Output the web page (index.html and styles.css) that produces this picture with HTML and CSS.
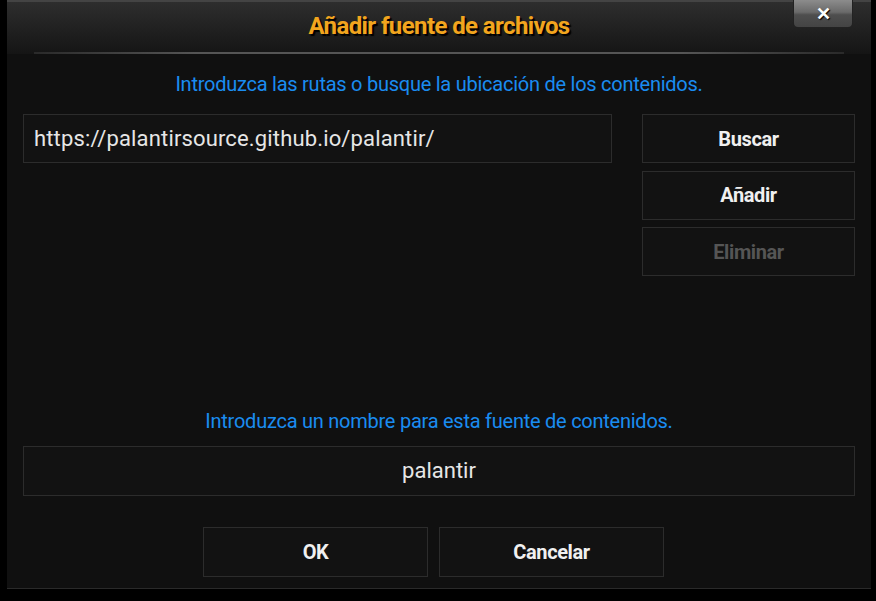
FILE: index.html
```html
<!DOCTYPE html>
<html lang="es">
<head>
<meta charset="UTF-8">
<title>Añadir fuente de archivos</title>
<link rel="stylesheet" href="styles.css">
</head>
<body>
<div class="dialog">
  <div class="header">
    <h1 class="title">Añadir fuente de archivos</h1>
    <button class="close">✕</button>
  </div>

  <div class="content">
    <p class="label label-top">Introduzca las rutas o busque la ubicación de los contenidos.</p>

    <div class="paths">
      <div class="field field-url">https://palantirsource.github.io/palantir/</div>
      <div class="side">
        <button class="btn">Buscar</button>
        <button class="btn">Añadir</button>
        <button class="btn disabled">Eliminar</button>
      </div>
    </div>

    <p class="label label-name">Introduzca un nombre para esta fuente de contenidos.</p>
    <div class="field field-name">palantir</div>

    <div class="actions">
      <button class="btn btn-wide">OK</button>
      <button class="btn btn-wide">Cancelar</button>
    </div>
  </div>
</div>
</body>
</html>
```

FILE: styles.css
```css
/* base */
body {
  margin: 0;
  background: #000;
  font-family: Roboto, "Liberation Sans", sans-serif;
  width: 876px;
  height: 601px;
  overflow: hidden;
}

.dialog {
  position: relative;
  margin-left: 7px;
  width: 864px;
  height: 588px;
  background: #101010;
  border-bottom: 1px solid #2a2a2a;
  display: flex;
  flex-direction: column;
}

/* header with title */
.header {
  height: 50px;
  padding-top: 2px;
  background: linear-gradient(#2e2e2e, #1c1c1c 70%, #151515);
  border-top: 2px solid #444;
  position: relative;
}
.header::after {
  content: "";
  position: absolute;
  left: 27px;
  right: 27px;
  bottom: 0;
  height: 2px;
  background: linear-gradient(90deg, #2a2a2a, #555 20%, #555 80%, #2a2a2a);
}
.title {
  margin: 0;
  text-align: center;
  font-size: 24px;
  font-weight: bold;
  color: #f2a51e;
  line-height: 44px;
  text-shadow: 2px 2px 1px #000;
  letter-spacing: -0.6px;
}

.close {
  position: absolute;
  top: -2px;
  left: 786px;
  width: 60px;
  height: 28px;
  border: 1px solid #222;
  border-top: none;
  border-radius: 0 0 5px 5px;
  background: linear-gradient(#8c8c8c, #6a6a6a 45%, #4e4e4e 55%, #444);
  color: #fff;
  font-size: 18px;
  font-weight: bold;
  text-shadow: 1px 1px 1px #000;
  padding: 0;
  cursor: pointer;
}

/* body */
.content {
  flex: 1;
  padding: 0 16px;
  display: flex;
  flex-direction: column;
}
.label {
  margin: 0;
  text-align: center;
  color: #1a8cf0;
  font-size: 20px;
  letter-spacing: -0.25px;
  line-height: 26px;
}
.label-top {
  margin-top: 17px;
}

.paths {
  display: flex;
  gap: 30px;
  margin-top: 17px;
}

.field {
  box-sizing: border-box;
  height: 49px;
  background: #121212;
  border: 1px solid #2c2c2c;
  color: #e6e6e6;
  font-size: 22px;
  line-height: 47px;
}
.field-url {
  width: 589px;
  padding-left: 10px;
  letter-spacing: 0.15px;
}

.side {
  width: 213px;
  display: flex;
  flex-direction: column;
  gap: 7.5px;
}

.btn {
  box-sizing: border-box;
  height: 49px;
  background: #121212;
  border: 1px solid #2c2c2c;
  color: #f0f0f0;
  font-family: Roboto, "Liberation Sans", sans-serif;
  font-size: 20px;
  font-weight: bold;
  letter-spacing: -0.4px;
  padding: 0;
  cursor: pointer;
}
.btn.disabled {
  color: #555;
}

.label-name {
  margin-top: 132px;
}
.field-name {
  margin-top: 12px;
  text-align: center;
  height: 50px;
}

.actions {
  display: flex;
  justify-content: center;
  gap: 11px;
  margin-top: 31px;
  padding-right: 11px;
}
.btn-wide {
  width: 225px;
  height: 50px;
}
```
